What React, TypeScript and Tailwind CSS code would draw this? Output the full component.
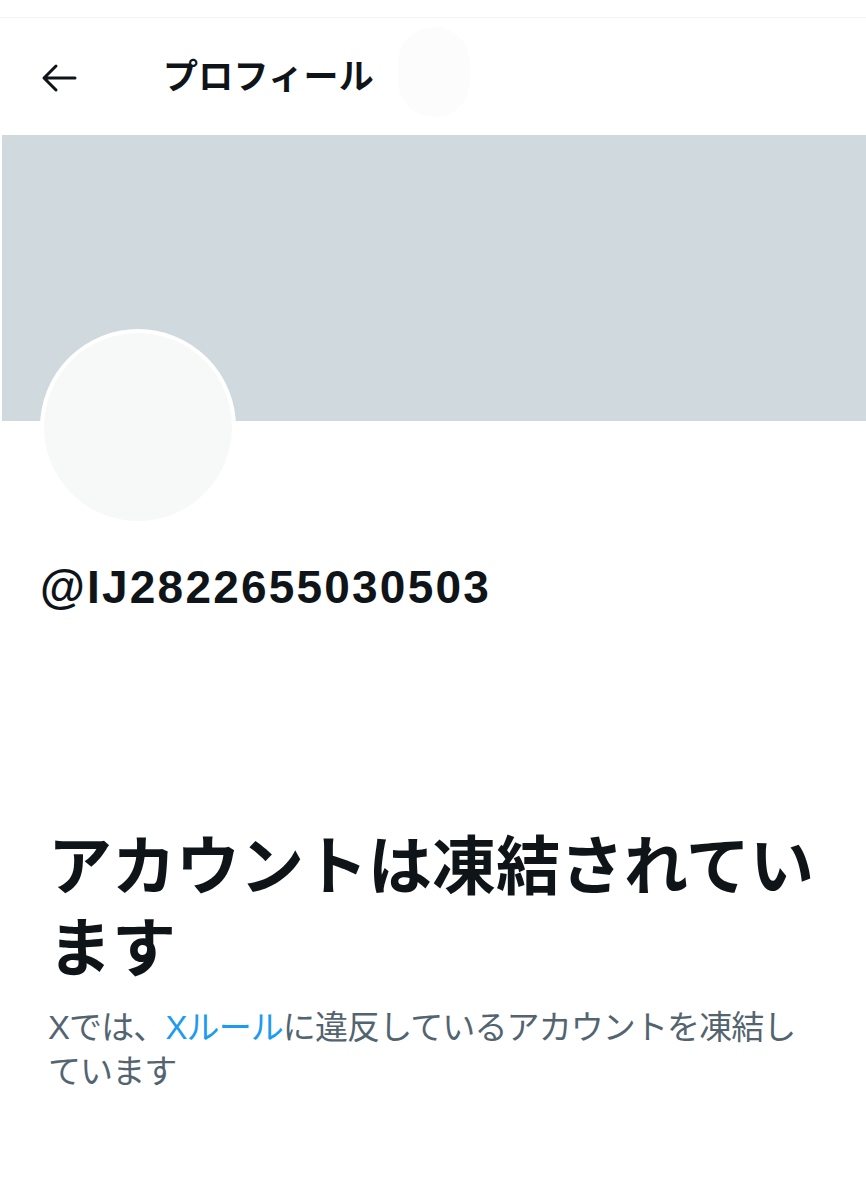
import React from "react";

const font = { fontFamily: '"Liberation Sans", "Noto Sans CJK JP", sans-serif' };

const BackArrow = () => (
  <svg width="36" height="30" viewBox="0 0 36 30" fill="none">
    <path
      d="M34 15H4M15 3L3 15l12 12"
      stroke="#0f1419"
      strokeWidth="3"
      strokeLinecap="round"
      strokeLinejoin="round"
    />
  </svg>
);

const Header = () => (
  <header className="mt-[17px] border-t border-[#eff3f4] h-[118px] flex items-center">
    <div className="w-[160px] pl-[41px] pt-[2px] flex items-center">
      <BackArrow />
    </div>
    <h1 className="text-[35px] font-bold text-[#0f1419] leading-none ml-[3px] tracking-[0.3px]">
      プロフィール
    </h1>
    <div className="ml-[24px] -mt-[10px] w-[72px] h-[90px] rounded-full bg-[#fcfcfc]" />
  </header>
);

export default function App() {
  return (
    <div className="w-[866px] min-h-[1200px] bg-white text-[#0f1419]" style={font}>
      <Header />
      <div className="ml-[2px] h-[286px] bg-[#cfd9de]" />
      <div className="px-[40px] -mt-[92px]">
        <div className="w-[196px] h-[196px] rounded-full bg-[#f7f9f9] border-[4px] border-white" />
        <div className="mt-[39px] text-[46px] font-bold leading-none tracking-[2.2px]">
          @IJ2822655030503
        </div>
      </div>
      <div className="px-[48px] mt-[216px]">
        <h2 className="text-[64px] font-bold leading-[82px] tracking-[0px]">
          アカウントは凍結されています
        </h2>
        <p className="mt-[16px] text-[33px] leading-[44px] text-[#536471] tracking-[-0.9px]">
          Xでは、<span className="text-[#1d9bf0]">Xルール</span>に違反しているアカウントを凍結しています
        </p>
      </div>
    </div>
  );
}
